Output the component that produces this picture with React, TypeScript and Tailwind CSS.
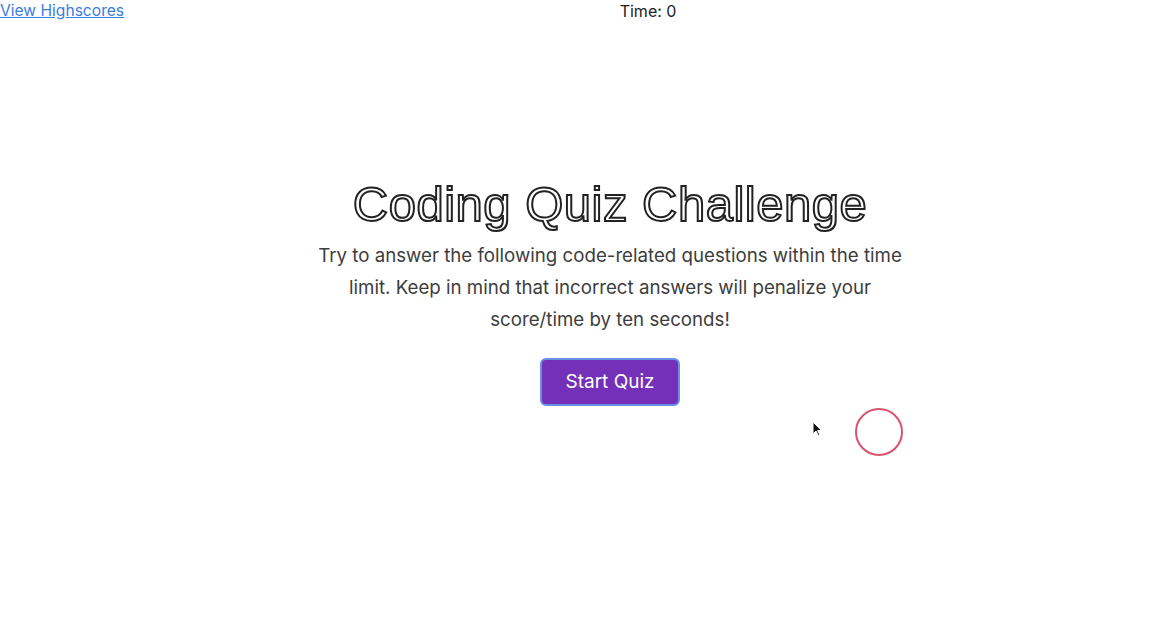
import React from 'react';

const App = () => {
  return (
    <div className="relative min-h-[619px] w-full bg-white" style={{ fontFamily: 'Inter, "Liberation Sans", sans-serif' }}>
      {/* Header */}
      <header className="flex justify-between items-start">
        <a href="#" className="text-[15.6px] leading-[22px] text-[#3b7de0] underline">
          View Highscores
        </a>
        <div className="text-[16px] leading-[22px] text-[#222222]">Time: 0</div>
        <div />
      </header>

      {/* Intro */}
      <main className="flex flex-col items-center pt-[154px] pl-[48px]">
        <h1
          className="text-[49px] leading-[56px] text-white tracking-[0.5px]"
          style={{ fontFamily: '"Liberation Sans", Arial, sans-serif', WebkitTextStroke: '2px #222222' }}
        >
          Coding Quiz Challenge
        </h1>
        <p className="mt-[8px] w-[600px] text-center text-[18.7px] leading-[32px] text-[#3d3d3d]">
          Try to answer the following code-related questions within the time limit. Keep in mind that incorrect answers will penalize your score/time by ten seconds!
        </p>
        <button className="mt-[22px] h-[48px] w-[140px] rounded-[6px] border-2 border-[#6a8fe8] bg-[#7430b8] text-[19px] text-white">
          Start Quiz
        </button>
      </main>

      {/* Click indicator from the recording */}
      <svg className="absolute left-[812px] top-[421px]" width="12" height="18" viewBox="0 0 12 18">
        <path d="M1 1 L1 13 L4 10 L6.5 15 L8 14.3 L5.6 9.5 L9.5 9.5 Z" fill="#111" stroke="#fff" strokeWidth="1" />
      </svg>
      <div className="absolute left-[855px] top-[408px] h-[48px] w-[48px] rounded-full border-2 border-[#d9536d]" />
    </div>
  );
};

export default App;
